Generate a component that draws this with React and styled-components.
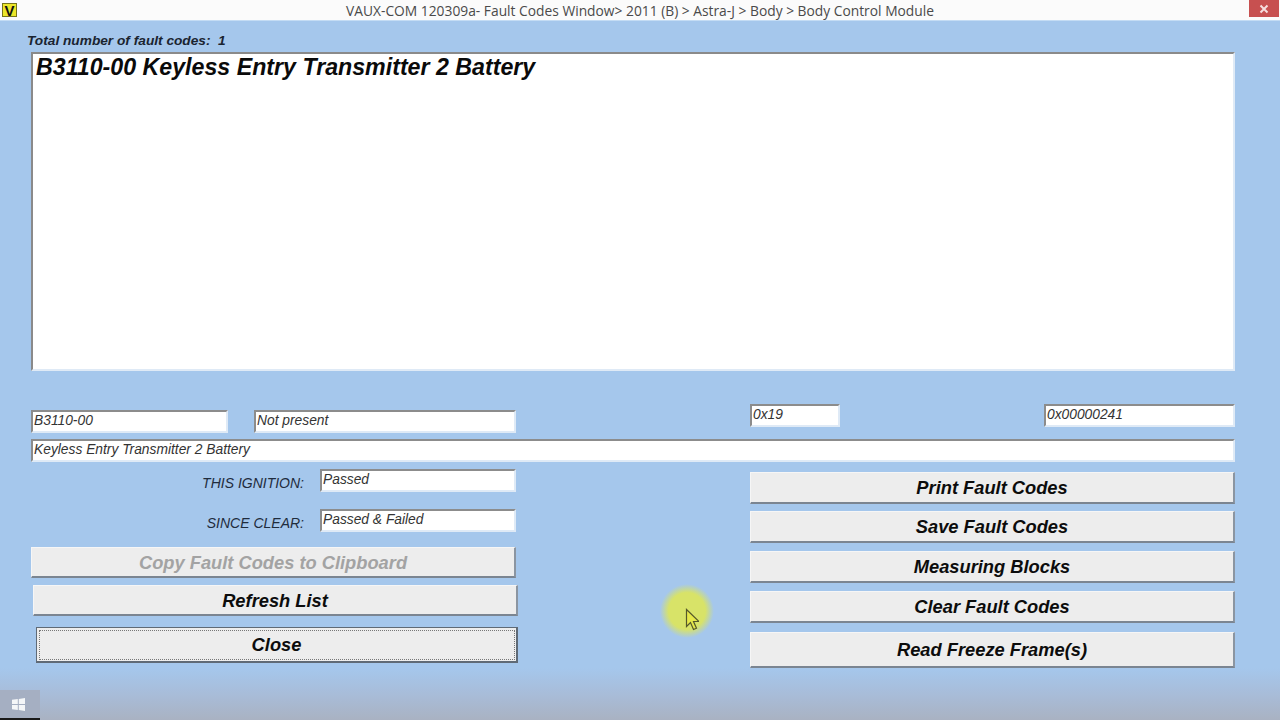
import React from "react";
import styled, { createGlobalStyle } from "styled-components";

const GlobalStyle = createGlobalStyle`
  html, body {
    margin: 0;
    padding: 0;
    height: 100%;
    overflow: hidden;
  }
  * {
    box-sizing: border-box;
  }
`;

const Page = styled.div`
  position: relative;
  width: 1280px;
  height: 720px;
  display: flex;
  flex-direction: column;
  background: linear-gradient(180deg, #a5c7ec 0, #a5c7ec 668px, #a8bcd8 695px, #a9b2c2 720px);
  font-family: "Liberation Sans", Arial, sans-serif;
  overflow: hidden;
`;

const TitleBar = styled.header`
  position: relative;
  flex: none;
  height: 21px;
  display: flex;
  align-items: center;
  justify-content: center;
  background: #fbfbfb;
  border-bottom: 1px solid #c4dcf4;
  font-family: "Open Sans", sans-serif;
  font-size: 13.8px;
  color: #4a4a4a;
`;

const AppIcon = styled.span`
  position: absolute;
  left: 2px;
  top: 3px;
  width: 15px;
  height: 14px;
  display: flex;
  align-items: center;
  justify-content: center;
  background: #ece628;
  border: 1px solid #77741a;
  font: bold 15px "Liberation Sans", sans-serif;
  color: #111;
`;

const CloseBox = styled.span`
  position: absolute;
  right: 1px;
  top: 0;
  width: 30px;
  height: 17px;
  display: flex;
  align-items: center;
  justify-content: center;
  background: #c75050;
`;

const Main = styled.main`
  flex: 1;
  display: flex;
  flex-direction: column;
  padding: 12px 45px 0 31px;
`;

const TotalLabel = styled.div`
  margin-left: -4px;
  height: 19px;
  line-height: 16px;
  font-size: 13.7px;
  font-weight: bold;
  font-style: italic;
  color: #1a2430;
`;

const FaultList = styled.div`
  height: 319px;
  padding: 0 3px;
  background: #fff;
  border-top: 2px solid #8a8a8a;
  border-left: 2px solid #8a8a8a;
  border-right: 2px solid #dfeaf6;
  border-bottom: 2px solid #dfeaf6;
  font-size: 23.2px;
  font-weight: bold;
  font-style: italic;
  line-height: 27px;
  color: #0a0a0a;
`;

const FieldsRow = styled.div`
  margin-top: 33px;
  display: flex;
  justify-content: space-between;
  align-items: flex-start;
`;

const Group = styled.div`
  display: flex;
  align-items: flex-start;
  margin-top: ${(p) => p.$top || 0}px;
`;

const Field = styled.div`
  flex: none;
  width: ${(p) => (p.$width ? `${p.$width}px` : "auto")};
  height: ${(p) => p.$height || 23}px;
  margin-left: ${(p) => p.$left || 0}px;
  padding-left: 1px;
  background: #fff;
  border-top: 2px solid #8c8c8c;
  border-left: 2px solid #8c8c8c;
  border-right: 2px solid #dfeaf6;
  border-bottom: 2px solid #dfeaf6;
  font-size: 13.8px;
  font-style: italic;
  line-height: ${(p) => p.$line || 17}px;
  color: #333;
  white-space: nowrap;
`;

const DescField = styled(Field)`
  margin-top: 6px;
`;

const Bottom = styled.div`
  margin-top: 7px;
  display: flex;
  justify-content: space-between;
  align-items: flex-start;
`;

const LeftColumn = styled.div`
  width: 487px;
  display: flex;
  flex-direction: column;
`;

const StatusRow = styled.div`
  display: flex;
  justify-content: flex-start;
  align-items: flex-start;
  height: 40px;
`;

const StatusLabel = styled.span`
  flex: none;
  width: 273px;
  margin: 5px 16px 0 0;
  text-align: right;
  font-size: 14px;
  font-style: italic;
  line-height: 18px;
  color: #1f2c3d;
`;

const ButtonStack = styled.div`
  width: 485px;
  margin-top: 3px;
  display: flex;
  flex-direction: column;
`;

const LeftButtons = styled.div`
  margin-top: -2px;
  display: flex;
  flex-direction: column;
`;

const WinButton = styled.button`
  display: block;
  height: ${(p) => p.$height || 32}px;
  width: ${(p) => p.$width || 485}px;
  margin: ${(p) => p.$top || 0}px 0 0 ${(p) => p.$left || 0}px;
  padding: 1px 0 0;
  background: #ededed;
  border: none;
  border-top: 1px solid #f6f6f6;
  border-left: 1px solid #f6f6f6;
  border-right: 2px solid #8b95a1;
  border-bottom: 2px solid #7b8591;
  font-family: "Liberation Sans", Arial, sans-serif;
  font-size: 18.3px;
  font-weight: bold;
  font-style: italic;
  color: ${(p) => (p.disabled ? "#a3a3a3" : "#0c0c0c")};
`;

const DefaultButton = styled(WinButton)`
  border: 1px solid #5f6a76;
  border-right: 2px solid #5f6a76;
  border-bottom: 2px solid #5f6a76;
  outline: 1px dotted #777;
  outline-offset: -4px;
`;

const Taskbar = styled.div`
  position: absolute;
  left: 0;
  bottom: 0;
  width: 40px;
  height: 30px;
  display: flex;
  align-items: center;
  padding-left: 12px;
  background: #a5afc2;
  border-bottom: 2px solid #1a1a1a;
`;

const Spotlight = styled.div`
  position: absolute;
  left: 660px;
  top: 584px;
  width: 54px;
  height: 54px;
  border-radius: 50%;
  background: radial-gradient(circle closest-side, #d8e368 0, #d8e368 68%, rgba(216, 227, 104, 0) 100%);
`;

const Pointer = styled.svg`
  position: absolute;
  left: 685px;
  top: 608px;
`;

const rightButtons = [
  { label: "Print Fault Codes", height: 32, top: 0 },
  { label: "Save Fault Codes", height: 32, top: 7 },
  { label: "Measuring Blocks", height: 32, top: 8 },
  { label: "Clear Fault Codes", height: 32, top: 8 },
  { label: "Read Freeze Frame(s)", height: 36, top: 9 },
];

export default function App() {
  return (
    <Page>
      <GlobalStyle />
      <TitleBar>
        <AppIcon>V</AppIcon>
        VAUX-COM 120309a- Fault Codes Window&gt; 2011 (B) &gt; Astra-J &gt; Body &gt; Body Control Module
        <CloseBox>
          <svg width="10" height="10" viewBox="0 0 10 10">
            <path d="M1.5 1.5l7 7M8.5 1.5l-7 7" stroke="#f6dede" strokeWidth="2" />
          </svg>
        </CloseBox>
      </TitleBar>
      <Main>
        <TotalLabel>Total number of fault codes:&nbsp; 1</TotalLabel>
        <FaultList>B3110-00 Keyless Entry Transmitter 2 Battery</FaultList>
        <FieldsRow>
          <Group $top={6}>
            <Field $width={197}>B3110-00</Field>
            <Field $width={262} $left={26}>Not present</Field>
          </Group>
          <Group>
            <Field $width={90}>0x19</Field>
            <Field $width={191} $left={204}>0x00000241</Field>
          </Group>
        </FieldsRow>
        <DescField>Keyless Entry Transmitter 2 Battery</DescField>
        <Bottom>
          <LeftColumn>
            <StatusRow>
              <StatusLabel>THIS IGNITION:</StatusLabel>
              <Field $width={196}>Passed</Field>
            </StatusRow>
            <StatusRow>
              <StatusLabel>SINCE CLEAR:</StatusLabel>
              <Field $width={196}>Passed &amp; Failed</Field>
            </StatusRow>
            <LeftButtons>
              <WinButton disabled $height={31}>Copy Fault Codes to Clipboard</WinButton>
              <WinButton $top={7} $left={2} $height={31}>Refresh List</WinButton>
              <DefaultButton $top={11} $left={5} $width={482} $height={36}>Close</DefaultButton>
            </LeftButtons>
          </LeftColumn>
          <ButtonStack>
            {rightButtons.map((b) => (
              <WinButton key={b.label} $height={b.height} $top={b.top}>{b.label}</WinButton>
            ))}
          </ButtonStack>
        </Bottom>
      </Main>
      <Taskbar>
        <svg width="13" height="13" viewBox="0 0 13 13">
          <path d="M0 1.8L5.8 1v5H0zM6.8.9L13 0v6H6.8zM0 7h5.8v5L0 11.2zM6.8 7H13v6l-6.2-.9z" fill="#f4f6f8" />
        </svg>
      </Taskbar>
      <Spotlight />
      <Pointer width="14" height="24" viewBox="0 0 14 24">
        <path d="M1.5 1.5v17l4-4 3 7 3-1.3-3-6.7h5.5z" fill="#e6e84a" stroke="#55582a" strokeWidth="1.2" />
      </Pointer>
    </Page>
  );
}
